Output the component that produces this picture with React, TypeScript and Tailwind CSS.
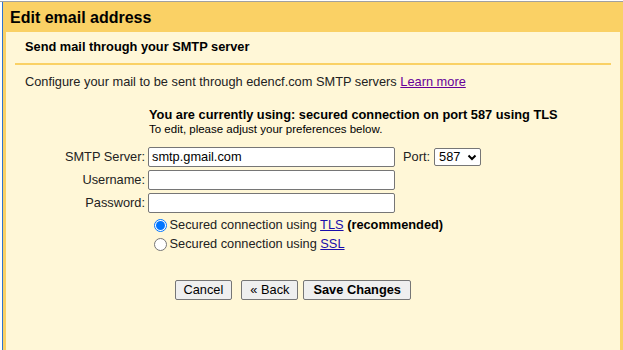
import React from "react";

const font = { fontFamily: '"Liberation Sans", Arial, sans-serif' };

function Radio({ checked }: { checked?: boolean }) {
  return checked ? (
    <span className="inline-flex w-[13px] h-[13px] rounded-full border-[1px] border-[#0075ff] bg-white items-center justify-center shrink-0">
      <span className="w-[9px] h-[9px] rounded-full bg-[#0075ff]" />
    </span>
  ) : (
    <span className="inline-block w-[13px] h-[13px] rounded-full border-[1px] border-[#767676] bg-white shrink-0" />
  );
}

export default function App() {
  return (
    <div className="w-[623px] h-[350px] overflow-hidden bg-white flex flex-col text-[#222]" style={font}>
      <div className="h-[1px] bg-white shrink-0" />
      <div className="h-[1px] bg-[#a0a0a0] shrink-0" />
      <div className="flex flex-1 min-h-0">
        <div className="w-[2px] bg-white shrink-0" />
        <div className="w-[1px] bg-[#2f74d0] shrink-0" />
        <div className="flex-1 flex flex-col min-w-0">
          <div className="h-[30px] bg-[#fad165] flex items-center pl-[7px] shrink-0">
            <span className="text-[16px] font-bold text-black leading-none mt-[1px]">Edit email address</span>
          </div>
          <div className="flex-1 bg-[#fff7d7] border-x-[3px] border-[#fad165]">
            <div className="pt-[7px] pl-[19px] text-[12.8px] font-bold leading-[16px] text-black">
              Send mail through your SMTP server
            </div>
            <div className="mt-[8px] mx-[9px] h-[2px] bg-[#fad165]" />
            <div className="mt-[9px] pl-[19px] text-[12.8px] leading-[16px]">
              Configure your mail to be sent through edencf.com SMTP servers{" "}
              <a className="text-[#660099] underline">Learn more</a>
            </div>
            <div className="mt-[17px] pl-[143px]">
              <div className="text-[12.8px] font-bold leading-[16px] text-black">
                You are currently using: secured connection on port 587 using TLS
              </div>
              <div className="text-[11.5px] leading-[12px] text-black">
                To edit, please adjust your preferences below.
              </div>
            </div>
            <div className="mt-[12px] grid grid-cols-[139px_auto] gap-x-[3px] gap-y-[3px] items-center text-[12.8px]">
              <div className="text-right leading-[20px]">SMTP Server:</div>
              <div className="flex items-center">
                <div className="w-[247px] h-[20px] bg-white border border-[#767676] rounded-[2px] px-[3px] flex items-center text-black">
                  smtp.gmail.com
                </div>
                <span className="ml-[8px] mr-[4px]">Port:</span>
                <div className="h-[18px] w-[47px] bg-white border border-[#767676] rounded-[2px] flex items-center pl-[4px] pr-[3px] justify-between text-black">
                  <span>587</span>
                  <svg width="10" height="7" viewBox="0 0 10 7">
                    <path d="M1.5 1.5 L5 5 L8.5 1.5" fill="none" stroke="#000" strokeWidth="2" />
                  </svg>
                </div>
              </div>
              <div className="text-right leading-[20px]">Username:</div>
              <div>
                <div className="w-[247px] h-[20px] bg-white border border-[#767676] rounded-[2px]" />
              </div>
              <div className="text-right leading-[20px]">Password:</div>
              <div>
                <div className="w-[247px] h-[20px] bg-white border border-[#767676] rounded-[2px]" />
              </div>
            </div>
            <div className="mt-[3px] pl-[147.5px] text-[12.8px] flex flex-col gap-[1px]">
              <div className="flex items-center h-[18px] gap-[3px]">
                <Radio checked />
                <span>
                  Secured connection using <a className="text-[#1a0dab] underline">TLS</a>{" "}
                  <b className="text-black">(recommended)</b>
                </span>
              </div>
              <div className="flex items-center h-[18px] gap-[3px]">
                <Radio />
                <span>
                  Secured connection using <a className="text-[#1a0dab] underline">SSL</a>
                </span>
              </div>
            </div>
            <div className="mt-[27px] pl-[168.5px] flex items-center text-[12.8px] text-black">
              <button className="h-[20px] px-[8px] bg-[#efefef] border border-[#767676] rounded-[2px] leading-none">
                Cancel
              </button>
              <button className="ml-[9px] h-[20px] px-[8px] bg-[#efefef] border border-[#767676] rounded-[2px] leading-none">
                « Back
              </button>
              <button className="ml-[5px] h-[20px] px-[9px] bg-[#efefef] border border-[#767676] rounded-[2px] leading-none font-bold">
                Save Changes
              </button>
            </div>
          </div>
        </div>
      </div>
    </div>
  );
}
